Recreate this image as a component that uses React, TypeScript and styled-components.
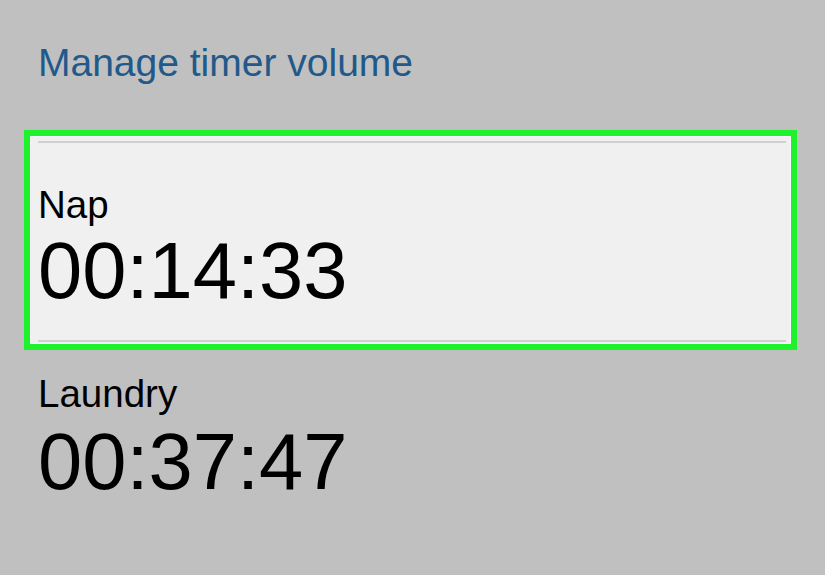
import React from 'react';
import styled, { createGlobalStyle } from 'styled-components';

interface ITimer {
    name: string;
    time: string;
    focused?: boolean;
}

const GlobalStyle = createGlobalStyle`
    html, body {
        margin: 0;
        padding: 0;
        background: #c0c0c0;
    }
    body {
        font-family: "Liberation Sans", Arial, Helvetica, sans-serif;
        color: #000000;
    }
`

const Page = styled.div`
    box-sizing: border-box;
    padding: 43px 28px 0 24px;
`

const Title = styled.h1`
    margin: 0 0 0 14px;
    font-size: 39px;
    font-weight: 400;
    line-height: 1;
    color: #21598a;
`

const TimerList = styled.div`
    display: flex;
    flex-direction: column;
    margin-top: 48px;
`

const FocusFrame = styled.div`
    border: 6px solid #1df22b;
    background: #f0f0f0;
    box-shadow: inset 0 0 0 1px #fafafa;
    padding: 5px 5px 2px 8px;
`

const ItemBody = styled.div`
    border-top: 2px solid #d0d0d0;
    border-bottom: 2px solid #d0d0d0;
    padding: 43px 0 30px;
`

const PlainItem = styled.div`
    padding: 25px 0 0 14px;
`

const Label = styled.div`
    font-size: 38.5px;
    line-height: 1;
`

const Time = styled.div<{ $gap: number }>`
    margin-top: ${props => props.$gap}px;
    font-size: 79.5px;
    line-height: 1;
`

const TimerContent = ({ name, time, gap }: { name: string; time: string; gap: number }) => (
    <>
        <Label>{name}</Label>
        <Time $gap={gap}>{time}</Time>
    </>
)

const TimerRow = ({ name, time, focused }: ITimer) => {
    if (focused) {
        return (
            <FocusFrame>
                <ItemBody>
                    <TimerContent name={name} time={time} gap={6} />
                </ItemBody>
            </FocusFrame>
        )
    }
    return (
        <PlainItem>
            <TimerContent name={name} time={time} gap={8} />
        </PlainItem>
    )
}

const timers: ITimer[] = [
    { name: 'Nap', time: '00:14:33', focused: true },
    { name: 'Laundry', time: '00:37:47' },
]

const App = () => {
    return (
        <>
            <GlobalStyle />
            <Page>
                <Title>Manage timer volume</Title>
                <TimerList>
                    {timers.map(timer => (
                        <TimerRow key={timer.name} {...timer} />
                    ))}
                </TimerList>
            </Page>
        </>
    )
}

export default App;
